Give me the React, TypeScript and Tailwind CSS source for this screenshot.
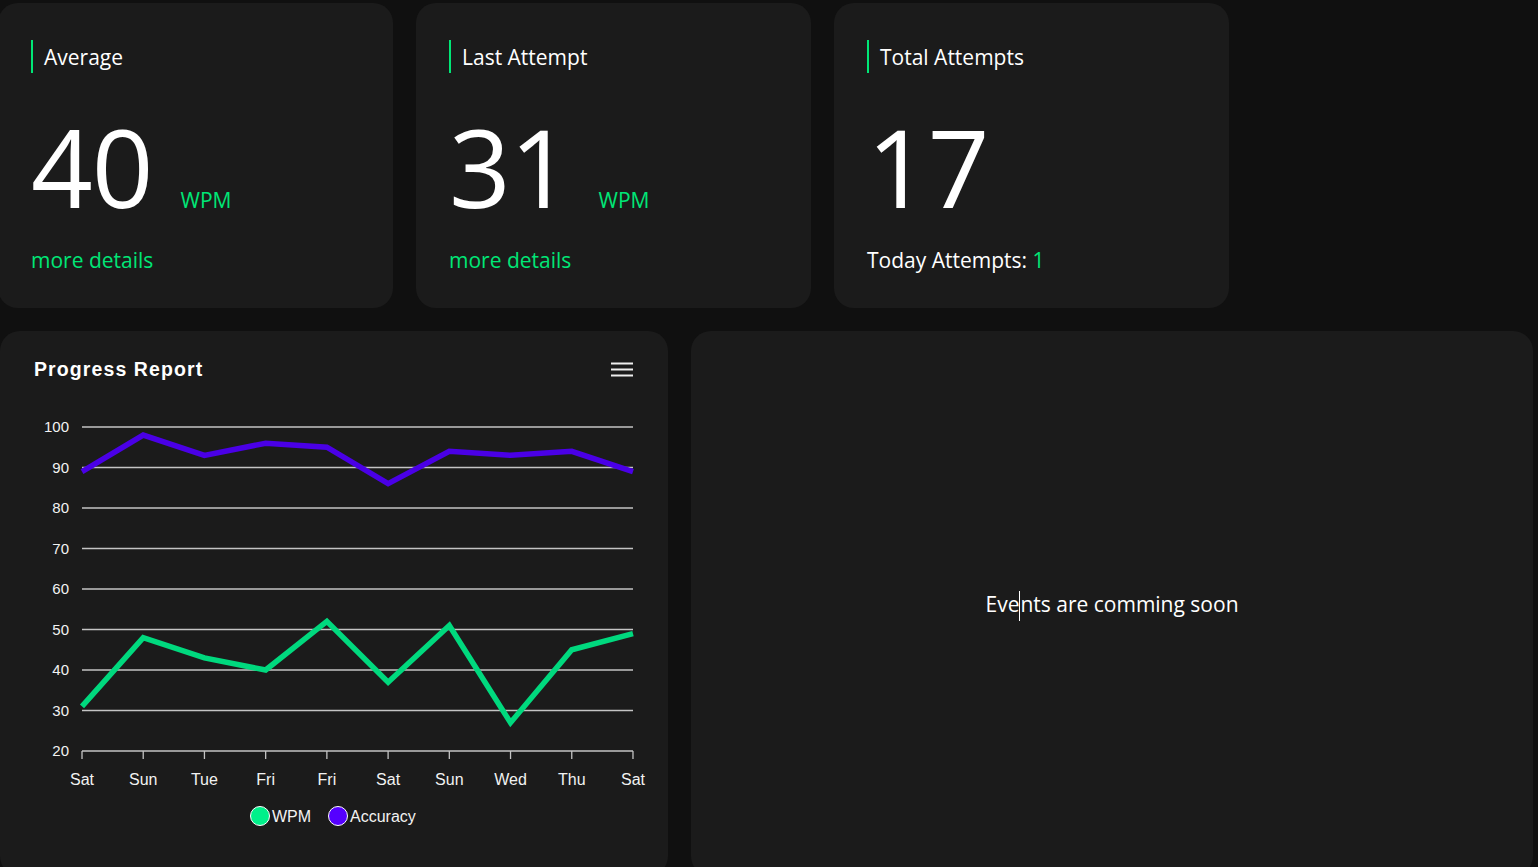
import React from "react";

const days = ["Sat", "Sun", "Tue", "Fri", "Fri", "Sat", "Sun", "Wed", "Thu", "Sat"];
const wpm = [31, 48, 43, 40, 52, 37, 51, 27, 45, 49];
const acc = [89, 98, 93, 96, 95, 86, 94, 93, 94, 89];
const X0 = 82;
const DX = 61.22;
const Y20 = 370;
const K = 4.05;
const yOf = (v: number) => Y20 - (v - 20) * K;
const xOf = (i: number) => X0 + i * DX;

function Chart() {
  const ticks = [100, 90, 80, 70, 60, 50, 40, 30, 20];
  const pts = (arr: number[]) => arr.map((v, i) => `${xOf(i)},${yOf(v)}`).join(" ");
  return (
    <svg width={668} height={470} style={{ display: "block", fontFamily: "'Liberation Sans', Arial, sans-serif" }}>
      {ticks.map((t) => (
        <g key={t}>
          <line x1={82} x2={633} y1={yOf(t)} y2={yOf(t)} stroke="#c4c4c4" strokeWidth={1.3} />
          <text x={69} y={yOf(t) + 5} textAnchor="end" fontSize={15} fill="#f2f2f2">
            {t}
          </text>
        </g>
      ))}
      {days.map((d, i) => (
        <g key={i}>
          <line x1={xOf(i)} x2={xOf(i)} y1={370} y2={378} stroke="#c4c4c4" strokeWidth={1.3} />
          <text x={xOf(i)} y={404} textAnchor="middle" fontSize={16} fill="#f2f2f2">
            {d}
          </text>
        </g>
      ))}
      <polyline points={pts(acc)} fill="none" stroke="#4a00e6" strokeWidth={5.5} strokeLinejoin="miter" />
      <polyline points={pts(wpm)} fill="none" stroke="#00d97e" strokeWidth={5.5} strokeLinejoin="miter" />
      <circle cx={260} cy={435} r={9.5} fill="#00f08a" stroke="#ffffff" strokeWidth={1} />
      <text x={272} y={441} fontSize={16} fill="#f2f2f2">WPM</text>
      <circle cx={338} cy={435} r={9.5} fill="#5500ff" stroke="#ffffff" strokeWidth={1} />
      <text x={350} y={441} fontSize={16} fill="#f2f2f2">Accuracy</text>
    </svg>
  );
}

function StatCard({
  title,
  value,
  unit,
  footer,
}: {
  title: string;
  value: string;
  unit?: string;
  footer: React.ReactNode;
}) {
  return (
    <div className="w-[395px] h-[305px] shrink-0 rounded-[20px] bg-[#1b1b1b] pl-[33px] pt-[37px] flex flex-col">
      <div className="h-[33px] border-l-[2px] border-[#00e676] pl-[11px] flex items-center text-[21px] text-white leading-none">
        <span className="mt-[2px]">{title}</span>
      </div>
      <div className="flex items-baseline mt-[44px] h-[100px]">
        <span className="text-[108px] leading-[100px] text-white tracking-[-1px]">{value}</span>
        {unit && <span className="ml-[28px] text-[21px] text-[#00e676] leading-none">{unit}</span>}
      </div>
      <div className="mt-[33px] text-[21px] leading-none">{footer}</div>
    </div>
  );
}

export default function App() {
  return (
    <div
      className="h-screen w-full overflow-hidden bg-[#101010]"
      style={{ fontFamily: "'Open Sans', 'Noto Sans', sans-serif" }}
    >
      <div className="flex gap-[23px] pt-[3px] ml-[-2px]">
        <StatCard title="Average" value="40" unit="WPM" footer={<span className="text-[#00e676]">more details</span>} />
        <StatCard title="Last Attempt" value="31" unit="WPM" footer={<span className="text-[#00e676]">more details</span>} />
        <StatCard
          title="Total Attempts"
          value="17"
          footer={
            <span className="text-white">
              Today Attempts: <span className="text-[#00e676]">1</span>
            </span>
          }
        />
      </div>
      <div className="flex gap-[23px] mt-[23px] pr-[5px]">
        <div className="w-[668px] h-[545px] shrink-0 rounded-[20px] bg-[#1b1b1b] flex flex-col">
          <div className="h-[50px] pt-[26px] pl-[34px] pr-[35px] flex justify-between items-start">
            <span
              className="text-[19.5px] font-bold text-white leading-[24px] tracking-[1.1px]"
              style={{ fontFamily: "'Liberation Sans', Arial, sans-serif" }}
            >
              Progress Report
            </span>
            <svg width={22} height={16} className="mt-[5px]">
              <line x1={0} x2={22} y1={1.5} y2={1.5} stroke="#eee" strokeWidth={2} />
              <line x1={0} x2={22} y1={7.5} y2={7.5} stroke="#eee" strokeWidth={2} />
              <line x1={0} x2={22} y1={13.5} y2={13.5} stroke="#eee" strokeWidth={2} />
            </svg>
          </div>
          <Chart />
        </div>
        <div className="flex-1 h-[545px] rounded-[20px] bg-[#1b1b1b] flex items-center justify-center">
          <span className="text-[21px] text-white mt-[3px]">
            Eve<span className="inline-block w-px h-[30px] bg-white align-middle"></span>nts are comming soon
          </span>
        </div>
      </div>
    </div>
  );
}
